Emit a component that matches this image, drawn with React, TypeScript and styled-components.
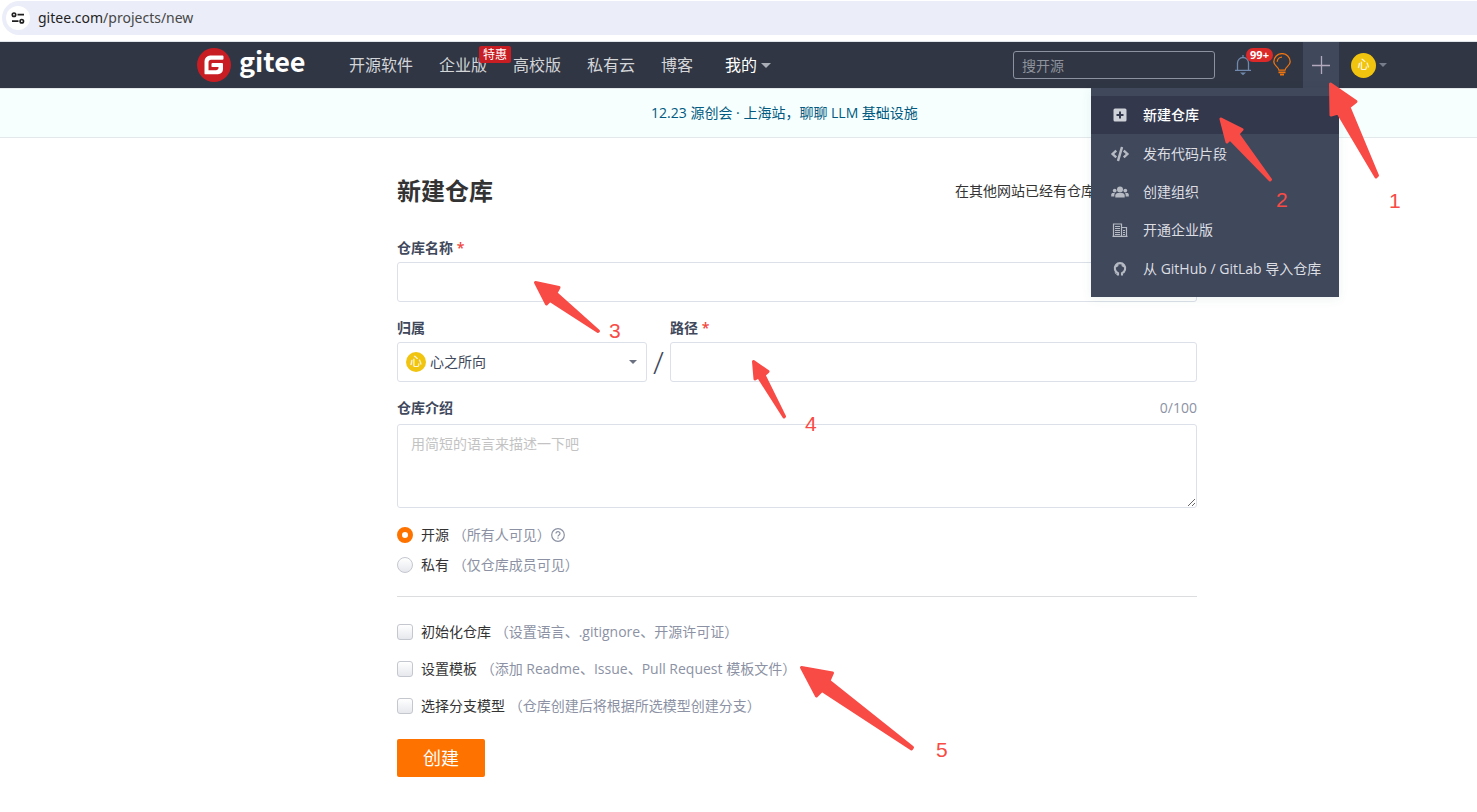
import React from "react";
import styled, { createGlobalStyle, css } from "styled-components";
import { FaCode } from "react-icons/fa";

const GlobalStyle = createGlobalStyle`
  * { box-sizing: border-box; }
  body {
    margin: 0;
    background: #fff;
    color: #333;
    font-family: "Open Sans", "Noto Sans CJK SC", sans-serif;
    font-size: 14px;
    line-height: 20px;
  }
  button, input, select, textarea { font: inherit; color: inherit; }
  a { color: inherit; text-decoration: none; }
`;

const Page = styled.div`
  position: relative;
  min-height: 100vh;
`;

const AddressBar = styled.div`
  padding: 1px 0 6px 2px;
  border-bottom: 1px solid #dfe5e8;
  font-family: "Noto Sans", sans-serif;
`;

const AddressPill = styled.div`
  display: flex;
  align-items: center;
  gap: 8px;
  height: 34px;
  padding-left: 4px;
  border-radius: 17px 0 0 17px;
  background: #ebeef8;
  color: #474747;
`;

const SiteInfo = styled.button`
  display: grid;
  place-items: center;
  width: 24px;
  height: 24px;
  padding: 0;
  border: 0;
  border-radius: 50%;
  background: #fff;
`;

const Host = styled.span`
  color: #1f1f1f;
`;

const Container = styled.div`
  padding: 0 80px 0 197px;
`;

const Header = styled.header`
  background: #303643;
`;

const HeaderRow = styled(Container)`
  display: flex;
  align-items: center;
  height: 46px;
`;

const Logo = styled.a`
  display: flex;
  align-items: center;
  gap: 8px;
  width: 152px;
  color: #fff;
`;

const LogoWord = styled.span`
  height: 40px;
  font: 700 27px/32px "Noto Sans CJK SC", sans-serif;
`;

const Nav = styled.nav`
  display: flex;
  gap: 26px;
  flex: 1;
  font-size: 16px;
  line-height: 24px;
  white-space: nowrap;
`;

const NavLink = styled.a`
  position: relative;
  color: #d3d5d9;
`;

const MineLink = styled(NavLink)`
  display: flex;
  align-items: center;
  gap: 4px;
  margin-left: 6px;
  color: #fff;
`;

const NavBadge = styled.span`
  position: absolute;
  top: -7px;
  left: 40px;
  padding: 0 4px;
  border-radius: 2px;
  background: #c71d23;
  color: #fff;
  font-size: 12px;
  line-height: 17px;
`;

const Caret = styled.span<{ $color: string; $size?: number }>`
  width: 0;
  border: solid transparent;
  border-width: ${(p) => `${p.$size ?? 4}px ${p.$size ?? 4}px 0`};
  border-top-color: ${(p) => p.$color};
`;

const Search = styled.input`
  width: 202px;
  height: 28px;
  margin-right: 18px;
  padding: 0 8px;
  border: 1px solid #8c92a0;
  border-radius: 3px;
  background: transparent;
  color: #fff;
  &::placeholder { color: #8e939c; }
`;

const IconButton = styled.button`
  position: relative;
  display: grid;
  place-items: center;
  width: 20px;
  height: 24px;
  padding: 0;
  border: 0;
  background: none;
`;

const CountBadge = styled.span`
  position: absolute;
  top: -5px;
  left: 13px;
  width: 27px;
  border-radius: 7px;
  background: #db2828;
  color: #fff;
  font-size: 11px;
  font-weight: 700;
  line-height: 14px;
  text-align: center;
`;

const HeaderTools = styled.div`
  display: flex;
  align-items: center;
  gap: 19px;
  margin-right: 11px;
`;

const CreateArea = styled.div`
  position: relative;
`;

const CreateButton = styled.button`
  display: grid;
  place-items: center;
  width: 36px;
  height: 46px;
  padding: 0;
  border: 0;
  background: #40485b;
`;

const Menu = styled.ul`
  position: absolute;
  z-index: 2;
  top: 100%;
  right: 0;
  display: grid;
  grid-auto-rows: 1fr;
  width: 248px;
  height: 209px;
  margin: 0;
  padding: 8px 0 9px;
  list-style: none;
  background: #40485b;
  box-shadow: 0 2px 10px rgba(40, 90, 90, 0.08);
`;

const MenuLink = styled.a<{ $active?: boolean }>`
  display: flex;
  align-items: center;
  gap: 14px;
  height: 100%;
  padding-left: 20px;
  background: ${(p) => (p.$active ? "#33384c" : "transparent")};
  color: ${(p) => (p.$active ? "#fff" : "#dcdee3")};
  font-weight: ${(p) => (p.$active ? 500 : 400)};
  white-space: nowrap;
  svg { width: 18px; color: #b6bac3; }
`;

const UserMenu = styled.button`
  display: flex;
  align-items: center;
  gap: 3px;
  margin: 0 10px 0 12px;
  padding: 0;
  border: 0;
  background: none;
`;

const Avatar = styled.span<{ $size: number }>`
  display: grid;
  place-items: center;
  width: ${(p) => p.$size}px;
  height: ${(p) => p.$size}px;
  border-radius: 50%;
  background: #f1c40f;
  color: #fff;
  font-size: 12px;
  line-height: 16px;
`;

const Notice = styled.div`
  padding: 14px 0;
  border: solid #e3e9ea;
  border-width: 1px 0;
  background: #f6fffe;
`;

const NoticeRow = styled(Container)`
  display: flex;
  justify-content: center;
  padding-right: 105px;
  color: #005980;
`;

const Main = styled(Container)`
  padding-top: 35px;
`;

const Form = styled.form`
  max-width: 800px;
  margin: 0 auto;
`;

const TitleRow = styled.div`
  display: flex;
  align-items: center;
  justify-content: space-between;
  margin-bottom: 29px;
`;

const Title = styled.h1`
  margin: 0;
  font-size: 24px;
  font-weight: 700;
  line-height: 36px;
`;

const ImportHint = styled.p`
  width: 242px;
  margin: 0;
`;

const Field = styled.div`
  display: flex;
  flex-direction: column;
  gap: 4px;
`;

const FieldRow = styled.div`
  display: flex;
  align-items: flex-end;
  margin: 16px 0;
`;

const OwnerField = styled(Field)`
  width: 250px;
`;

const PathField = styled(Field)`
  flex: 1;
`;

const Label = styled.label`
  color: #40485b;
  font-weight: 600;
`;

const Required = styled.span`
  color: #f2453c;
`;

const control = css`
  width: 100%;
  border: 1px solid #dce0e8;
  border-radius: 3px;
  background: #fff;
  outline: none;
`;

const TextInput = styled.input`
  ${control}
  height: 40px;
  padding: 0 14px;
`;

const SelectBox = styled.div`
  position: relative;
  ${Avatar} {
    position: absolute;
    top: 10px;
    left: 9px;
  }
  ${Caret} {
    position: absolute;
    top: 18px;
    right: 10px;
  }
`;

const Select = styled.select`
  ${control}
  display: block;
  height: 40px;
  padding: 0 32px;
  appearance: none;
  color: #40485b;
`;

const Slash = styled.span`
  width: 23px;
  color: #40485b;
  font-size: 32px;
  font-weight: 300;
  line-height: 40px;
  text-align: center;
`;

const LabelRow = styled.div`
  display: flex;
  justify-content: space-between;
`;

const Counter = styled.span`
  color: #8c92a4;
`;

const TextArea = styled.textarea`
  ${control}
  display: block;
  height: 84px;
  margin-top: 2px;
  padding: 9px 13px;
  resize: vertical;
  &::placeholder { color: #c3c3c3; }
`;

const Options = styled.div<{ $gap: number }>`
  display: flex;
  flex-direction: column;
  gap: ${(p) => p.$gap}px;
`;

const Visibility = styled(Options)`
  margin-top: 17px;
`;

const Option = styled.div`
  display: flex;
  align-items: center;
`;

const OptionLabel = styled.label`
  white-space: pre;
`;

const Hint = styled.span`
  color: #8c92a4;
`;

const tick = css`
  width: 16px;
  height: 16px;
  margin: 0 8px 0 0;
  appearance: none;
  border: 1px solid #c4c7ce;
  background: linear-gradient(#fff, #e6e8ed);
`;

const Radio = styled.input`
  ${tick}
  border-radius: 50%;
  &:checked {
    border: 5px solid #fe7300;
    background: #fff;
  }
`;

const Checkbox = styled.input`
  ${tick}
  border-radius: 3px;
`;

const Divider = styled.hr`
  margin: 21px 0 25px;
  border: 0;
  border-top: 1px solid #dcdddf;
`;

const Submit = styled.button`
  width: 88px;
  height: 38px;
  margin-top: 23px;
  padding: 0;
  border: 0;
  border-radius: 2px;
  background: #fe7300;
  color: #fff;
  font-size: 18px;
`;

const Arrows = styled.svg`
  position: absolute;
  z-index: 3;
  inset: 0;
  width: 100%;
  height: 100%;
  pointer-events: none;
  fill: #f94b46;
  stroke: #f94b46;
  stroke-width: 3;
  stroke-linejoin: round;
`;

const Step = styled.span<{ $x: number; $y: number }>`
  position: absolute;
  z-index: 3;
  left: ${(p) => p.$x}px;
  top: ${(p) => p.$y}px;
  color: #f94b46;
  font: 21px/20px "Liberation Sans", sans-serif;
`;

const arrows = [
  "1330.5,84 1356,101.5 1349,107 1377.5,175.5 1376,177 1338,113 1331,115",
  "1221,119 1242,129.5 1238,134 1270.5,179.5 1270,180 1230,139 1227,142",
  "535.5,282.5 559,287.5 556,293 598.5,331 598,331.5 550,300.5 546.5,304",
  "753.5,361.5 768,371.5 764,375 784.5,416.5 784,417 758.5,377 755,379",
  "801.5,667.5 832.5,673 829,681 912.5,747.5 911.5,749 822,690.5 816.5,696",
];

const steps = [
  { n: 1, x: 1389, y: 191 },
  { n: 2, x: 1276, y: 190 },
  { n: 3, x: 609, y: 321 },
  { n: 4, x: 805, y: 414 },
  { n: 5, x: 936, y: 740 },
];

const TuneIcon = () => (
  <svg width="14" height="12" viewBox="0 0 14 12" fill="none" stroke="#1f1f1f" strokeWidth="1.7">
    <circle cx="3" cy="2.7" r="1.7" />
    <path d="M6.5 2.7H13M1 9.2H7.5" />
    <circle cx="10.8" cy="9.2" r="1.7" />
  </svg>
);

const LogoMark = () => (
  <svg width="34" height="34" viewBox="0 0 34 34">
    <circle cx="17" cy="17" r="17" fill="#c71d23" />
    <path
      fill="#fff"
      d="M25.6 7.6H13.2A5.7 5.7 0 0 0 7.5 13.3V25.4c0 .5.4.9.9.9H21a5 5 0 0 0 5-5V16c0-.5-.4-.9-.9-.9H15.4c-.5 0-.9.4-.9.9v2.2c0 .5.4.9.9.9h6.1v.6c0 1.4-1.1 2.5-2.5 2.5H11.5V14.2c0-1.4 1.1-2.5 2.5-2.5h11.6c.5 0 .9-.4.9-.9V8.5c0-.5-.4-.9-.9-.9z"
    />
  </svg>
);

const BellIcon = () => (
  <svg width="18" height="22" viewBox="0 0 18 22" fill="none" stroke="#7089ad" strokeWidth="1.3">
    <path d="M9 1V3M3.5 16V9a5.5 5.5 0 0 1 11 0V16M1 16.3H17" />
    <path d="M6 18.5H12L9 21.3z" fill="#7089ad" stroke="none" />
  </svg>
);

const BulbIcon = () => (
  <svg width="20" height="24" viewBox="0 0 20 24" fill="none" stroke="#ee7410" strokeWidth="1.3">
    <path d="M7 17.2C7 14 1.8 13 1.8 8.8a8.2 8.2 0 0 1 16.4 0C18.2 13 13 14 13 17.2z" />
    <path d="M5.2 8.8A4.8 4.8 0 0 1 10 4.2" />
    <path d="M6.5 19.3H13.5M8 21.7H12" strokeWidth="1.8" />
  </svg>
);

const PlusIcon = () => (
  <svg width="18" height="18" viewBox="0 0 18 18" stroke="#b3a9bd" strokeWidth="1.3">
    <path d="M9.5 0V18M0 9.5H18" />
  </svg>
);

const PlusSquareIcon = () => (
  <svg height="14" viewBox="0 0 18 14">
    <path
      fill="#cfd1d8"
      fillRule="evenodd"
      d="M4 .5H14a1.5 1.5 0 0 1 1.5 1.5V12a1.5 1.5 0 0 1-1.5 1.5H4A1.5 1.5 0 0 1 2.5 12V2A1.5 1.5 0 0 1 4 .5zM8 3.5V6H5.5V8H8v2.5h2V8h2.5V6H10V3.5z"
    />
  </svg>
);

const GroupIcon = () => (
  <svg height="14" viewBox="0 0 18 14" fill="currentColor">
    <circle cx="9" cy="4.5" r="3" />
    <circle cx="3.7" cy="5.6" r="1.9" />
    <circle cx="14.3" cy="5.6" r="1.9" />
    <path d="M4.3 12.5V10.5C4.3 8.9 5.5 8 6.8 8H11.2C12.5 8 13.7 8.9 13.7 10.5V12.5z" />
    <path d="M.2 11.5V9.8C.2 8.7 1 8.1 2 8.1H4C3.5 8.8 3.3 9.6 3.3 11.5zM17.8 11.5V9.8C17.8 8.7 17 8.1 16 8.1H14C14.5 8.8 14.7 9.6 14.7 11.5z" />
  </svg>
);

const BuildingIcon = () => (
  <svg height="14" viewBox="0 0 18 14" fill="none" stroke="currentColor">
    <path d="M2.5 13V1H10.5V13M10.5 4.5H15.5V13M1.5 13.3H16.5" strokeWidth="1.2" />
    <path d="M4 3.5H9M4 5.5H9M4 7.5H9M4 9.5H9M4 11.5H9M12 7.5H14M12 9.5H14M12 11.5H14" />
  </svg>
);

const OctocatIcon = () => (
  <svg height="16" viewBox="1 -1 16 16">
    <path
      d="M7 13.5V11.1A5.2 5.2 0 1 1 11 11.1V13.5"
      fill="none"
      stroke="currentColor"
      strokeWidth="2.1"
    />
    <path d="M5 5.5V2.2L8 3.8zM13 5.5V2.2L10 3.8z" fill="currentColor" />
    <path d="M6.5 12.5C5.2 12.6 4.9 11.3 3.8 10.8" fill="none" stroke="currentColor" />
  </svg>
);

const HelpIcon = () => (
  <svg width="14" height="14" viewBox="0 0 14 14" fill="none" stroke="#8c92a4" strokeWidth="1.2">
    <circle cx="7" cy="7" r="6.3" />
    <path d="M5 5.6C5 3 9 3 9 5.5 9 7 7 6.8 7 8.5M7 9.5V10.7" />
  </svg>
);

const menuItems = [
  { text: "新建仓库", icon: <PlusSquareIcon />, active: true },
  { text: "发布代码片段", icon: <FaCode size={18} /> },
  { text: "创建组织", icon: <GroupIcon /> },
  { text: "开通企业版", icon: <BuildingIcon /> },
  { text: "从 GitHub / GitLab 导入仓库", icon: <OctocatIcon /> },
];

const visibility = [
  { id: "public", name: "开源", hint: "（所有人可见）", help: true },
  { id: "private", name: "私有", hint: "（仅仓库成员可见）" },
];

const extras = [
  { id: "init", name: "初始化仓库", hint: "（设置语言、.gitignore、开源许可证）" },
  { id: "template", name: "设置模板", hint: "（添加 Readme、Issue、Pull Request 模板文件）" },
  { id: "branch", name: "选择分支模型", hint: "（仓库创建后将根据所选模型创建分支）" },
];

export default function App() {
  return (
    <Page>
      <GlobalStyle />
      <AddressBar>
        <AddressPill>
          <SiteInfo type="button"><TuneIcon /></SiteInfo>
          <span><Host>gitee.com</Host>/projects/new</span>
        </AddressPill>
      </AddressBar>

      <Header>
        <HeaderRow>
          <Logo href="#">
            <LogoMark />
            <LogoWord>gitee</LogoWord>
          </Logo>
          <Nav>
            <NavLink href="#">开源软件</NavLink>
            <NavLink href="#">企业版<NavBadge>特惠</NavBadge></NavLink>
            <NavLink href="#">高校版</NavLink>
            <NavLink href="#">私有云</NavLink>
            <NavLink href="#">博客</NavLink>
            <MineLink href="#">我的<Caret $color="#a9adb5" $size={5} /></MineLink>
          </Nav>
          <Search type="search" placeholder="搜开源" />
          <HeaderTools>
            <IconButton type="button"><BellIcon /><CountBadge>99+</CountBadge></IconButton>
            <IconButton type="button"><BulbIcon /></IconButton>
          </HeaderTools>
          <CreateArea>
            <CreateButton type="button"><PlusIcon /></CreateButton>
            <Menu>
              {menuItems.map((m) => (
                <li key={m.text}>
                  <MenuLink href="#" $active={m.active}>{m.icon}{m.text}</MenuLink>
                </li>
              ))}
            </Menu>
          </CreateArea>
          <UserMenu type="button">
            <Avatar $size={25}>心</Avatar>
            <Caret $color="#777d8a" />
          </UserMenu>
        </HeaderRow>
      </Header>

      <Notice>
        <NoticeRow><a href="#">12.23 源创会 · 上海站，聊聊 LLM 基础设施</a></NoticeRow>
      </Notice>

      <Main as="main">
        <Form>
          <TitleRow>
            <Title>新建仓库</Title>
            <ImportHint>在其他网站已经有仓库</ImportHint>
          </TitleRow>
          <Field>
            <Label htmlFor="name">仓库名称 <Required>*</Required></Label>
            <TextInput id="name" />
          </Field>
          <FieldRow>
            <OwnerField>
              <Label htmlFor="owner">归属</Label>
              <SelectBox>
                <Select id="owner"><option>心之所向</option></Select>
                <Avatar $size={20}>心</Avatar>
                <Caret $color="#6b7180" />
              </SelectBox>
            </OwnerField>
            <Slash>/</Slash>
            <PathField>
              <Label htmlFor="path">路径 <Required>*</Required></Label>
              <TextInput id="path" />
            </PathField>
          </FieldRow>
          <Field>
            <LabelRow>
              <Label htmlFor="intro">仓库介绍</Label>
              <Counter>0/100</Counter>
            </LabelRow>
            <TextArea id="intro" placeholder="用简短的语言来描述一下吧" />
          </Field>
          <Visibility $gap={10}>
            {visibility.map((v) => (
              <Option key={v.id}>
                <Radio type="radio" name="visibility" id={v.id} defaultChecked={v.id === "public"} />
                <OptionLabel htmlFor={v.id}>{v.name} <Hint>{v.hint}</Hint></OptionLabel>
                {v.help && <HelpIcon />}
              </Option>
            ))}
          </Visibility>
          <Divider />
          <Options $gap={17}>
            {extras.map((e) => (
              <Option key={e.id}>
                <Checkbox type="checkbox" id={e.id} />
                <OptionLabel htmlFor={e.id}>{e.name} <Hint>{e.hint}</Hint></OptionLabel>
              </Option>
            ))}
          </Options>
          <Submit type="submit">创建</Submit>
        </Form>
      </Main>

      <Arrows>
        {arrows.map((points) => <polygon key={points} points={points} />)}
      </Arrows>
      {steps.map((s) => <Step key={s.n} $x={s.x} $y={s.y}>{s.n}</Step>)}
    </Page>
  );
}
